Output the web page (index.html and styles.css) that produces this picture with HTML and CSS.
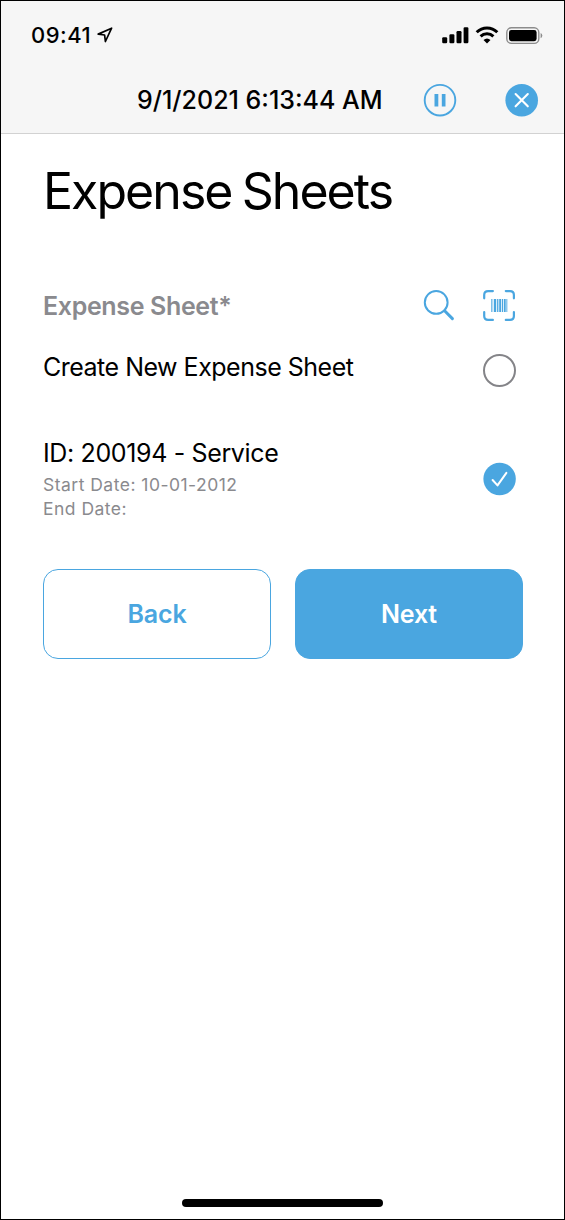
FILE: index.html
```html
<!DOCTYPE html>
<html lang="en">
<head>
<meta charset="utf-8">
<title>Expense Sheets</title>
<link rel="stylesheet" href="styles.css">
</head>
<body>
<div class="phone">
  <header class="header">
    <div class="status">
      <span class="time">09:41</span>
      <svg class="location" width="16" height="16" viewBox="0 0 16 16"><path d="M1.2 7.1 14.6 1.2 8.4 14.5 7.6 8z" fill="none" stroke="#000" stroke-width="1.7" stroke-linejoin="round"/></svg>
      <svg class="signals" width="104" height="20" viewBox="0 0 104 20">
        <rect x="1.2" y="12.3" width="5" height="6" rx="1.2"/><rect x="8.4" y="9.3" width="5" height="9" rx="1.2"/><rect x="15.5" y="6" width="5" height="12.3" rx="1.2"/><rect x="22.6" y="2.3" width="4.8" height="16" rx="1.2"/>
        <g fill="none" stroke="#000" stroke-width="3"><path d="M35.7 7.3A14.6 14.6 0 0 1 56.3 7.3"/><path d="M39.6 11.4A9.2 9.2 0 0 1 52.4 11.4"/></g>
        <path d="M42.5 15Q46 12 49.5 15L46 18.6z"/>
        <rect x="65.8" y="2.8" width="32" height="15.6" rx="4.6" fill="none" stroke="#8c8c8c" stroke-width="1.4"/>
        <rect x="68" y="5" width="27.6" height="11.2" rx="2.4"/>
        <path d="M99.6 8q1.7.6 1.7 2.6t-1.7 2.6z" fill="#8c8c8c"/>
      </svg>
    </div>
    <div class="nav">
      <h2 class="nav-title">9/1/2021 6:13:44 AM</h2>
      <svg class="pause" width="34" height="34" viewBox="0 0 34 34"><circle cx="17" cy="17.2" r="15.3" fill="none" stroke="#4aa6e0" stroke-width="1.9"/><path d="M11.5 11h3.8v12.6h-3.8zM18.8 11h3.7v12.6h-3.7z" fill="#4aa6e0"/></svg>
      <svg class="close" width="34" height="34" viewBox="0 0 34 34"><circle cx="16.7" cy="17.2" r="16.3" fill="#4aa6e0"/><path d="M10.6 11.1 22.8 23.3M22.8 11.1 10.6 23.3" stroke="#fff" stroke-width="2.1" stroke-linecap="round"/></svg>
    </div>
  </header>
  <main class="content">
    <h1 class="title">Expense Sheets</h1>
    <div class="row label-row">
      <span class="label">Expense Sheet*</span>
      <svg class="search" width="34" height="34" viewBox="0 0 34 34" fill="none" stroke="#4aa6e0"><circle cx="14.2" cy="14.4" r="11.4" stroke-width="2"/><path d="M22.6 22.8 30.4 30.6" stroke-width="3" stroke-linecap="round"/></svg>
      <svg class="scan" width="34" height="34" viewBox="0 0 34 34"><path d="M2.2 10.3V7Q2.2 3.1 6.1 3.1H10.9M23.8 3.1H28Q31.9 3.1 31.9 7V10.3M31.9 24V28Q31.9 31.9 28 31.9H23.8M10.9 31.9H6.1Q2.2 31.9 2.2 28V24" fill="none" stroke="#4aa6e0" stroke-width="2.2" stroke-linecap="round"/><path d="M9.3 11h1.1v13h-1.1zM11.8 11h2.4v13h-2.4zM15.1 11h1.3v13h-1.3zM17.2 11h1.8v13h-1.8zM19.8 11h1.4v13h-1.4zM22 11h1.7v13h-1.7zM24.4 11h.9v13h-.9z" fill="#4aa6e0"/></svg>
    </div>
    <div class="row create-row">
      <span class="option">Create New Expense Sheet</span>
      <span class="radio"></span>
    </div>
    <div class="row sheet-row">
      <div class="sheet">
        <span class="option sheet-id">ID: 200194 - Service</span>
        <span class="meta start">Start Date: 10-01-2012</span>
        <span class="meta end">End Date:</span>
      </div>
      <svg class="checked" width="34" height="34" viewBox="0 0 34 34"><circle cx="17.6" cy="17" r="16.2" fill="#4aa6e0"/><path d="M10.6 18 15.5 23.4 24.4 10.9" fill="none" stroke="#fff" stroke-width="2" stroke-linecap="round" stroke-linejoin="round"/></svg>
    </div>
    <div class="actions">
      <button class="button back"><span>Back</span></button>
      <button class="button next"><span>Next</span></button>
    </div>
  </main>
  <div class="home"></div>
</div>
</body>
</html>
```
FILE: styles.css
```css
* { box-sizing: border-box; }
body { margin: 0; background: #fff; color: #000; font-family: Inter, "Liberation Sans", sans-serif; }
h1, h2 { margin: 0; }
svg { display: block; flex: none; }
.phone { width: 565px; height: 1220px; border: 1px solid #000; display: flex; flex-direction: column; overflow: hidden; }
.header { height: 133px; background: #f6f6f6; border-bottom: 1px solid #d2d2d2; flex: none; }
.status { height: 68px; display: flex; align-items: center; padding-left: 30px; }
.time { width: 61px; font-size: 22px; font-weight: 500; line-height: 30px; letter-spacing: 0.5px; white-space: nowrap; }
.location { margin-left: 5px; }
.signals { margin-left: 328px; }
.nav { height: 62px; display: flex; align-items: center; padding-left: 136px; }
.nav-title { width: 286px; font-size: 25px; font-weight: 550; line-height: 34px; letter-spacing: 0; white-space: nowrap; }
.close { margin-left: 48px; }
.content { padding: 0 41px 0 42px; flex: 1; }
.title { margin-top: 27px; height: 60px; line-height: 60px; font-size: 50px; font-weight: 400; letter-spacing: -1.95px; word-spacing: -2px; white-space: nowrap; }
.row { display: flex; align-items: center; white-space: nowrap; }
.label-row { height: 40px; margin-top: 64px; padding-right: 7px; }
.label { flex: 1; font-size: 25px; font-weight: 600; letter-spacing: -0.35px; padding-top: 1px; color: #8a8a8e; }
.scan { margin-left: 26px; }
.create-row { height: 40px; margin-top: 22px; padding-right: 7px; }
.option { flex: 1; font-size: 25px; line-height: 34px; letter-spacing: -0.5px; }
.radio { width: 33px; height: 33px; margin-top: 6px; border: 2px solid #848488; border-radius: 50%; }
.sheet-row { margin-top: 49px; padding-right: 7px; }
.sheet { flex: 1; display: flex; flex-direction: column; }
.sheet .sheet-id { flex: none; height: 37px; letter-spacing: -0.36px; }
.meta { font-size: 17.5px; line-height: 24px; letter-spacing: 0.48px; color: #8a8a8e; }
.checked { margin-top: 0; }
.actions { display: grid; grid-template-columns: 1fr 1fr; gap: 24px; margin-top: 48px; }
.button { height: 90px; border: 1.5px solid #4aa6e0; border-radius: 15px; font: 600 25px/34px Inter, "Liberation Sans", sans-serif; letter-spacing: -0.2px; padding: 0; }
.back { background: #fff; color: #4aa6e0; }
.next { background: #4aa6e0; color: #fff; }
.home { width: 201px; height: 8px; border-radius: 4px; background: #000; margin: 0 auto 12px; flex: none; }
```
